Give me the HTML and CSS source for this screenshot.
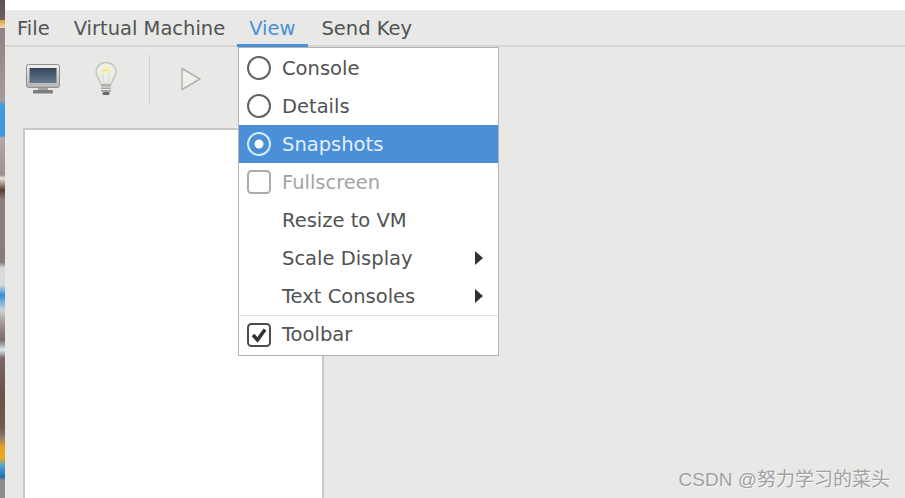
FILE: index.html
```html
<!DOCTYPE html>
<html lang="en">
<head>
    <meta charset="UTF-8">
    <meta name="viewport" content="width=device-width, initial-scale=1.0">
    <title>Virtual Machine</title>
    <link rel="stylesheet" href="styles.css">
</head>
<body>
    <div class="wallpaper"></div>
    <div class="main">
        <div class="top-strip"></div>
        <div class="window">
            <div class="menubar">
                <span class="menubar-item">File</span>
                <span class="menubar-item">Virtual Machine</span>
                <span class="menubar-item active">View</span>
                <span class="menubar-item send-key">Send Key</span>
            </div>
            <div class="toolbar">
                <svg class="tool-icon" width="34" height="30" viewBox="0 0 34 30">
                    <defs>
                        <linearGradient id="screenFill" x1="0" y1="0" x2="0" y2="1">
                            <stop offset="0" stop-color="#34465c"/>
                            <stop offset="1" stop-color="#67798f"/>
                        </linearGradient>
                        <linearGradient id="frameFill" x1="0" y1="0" x2="0" y2="1">
                            <stop offset="0" stop-color="#f0f0ef"/>
                            <stop offset="1" stop-color="#b4b4b3"/>
                        </linearGradient>
                    </defs>
                    <rect x="0.500" y="0.500" width="33" height="23" rx="2" fill="url(#frameFill)" stroke="#8f8f8f"/>
                    <rect x="3.500" y="4" width="27" height="15" fill="url(#screenFill)"/>
                    <rect x="12" y="24" width="10" height="2" fill="#a5a5a5"/>
                    <rect x="7" y="26" width="20" height="3.500" rx="1" fill="#7f7f7f"/>
                </svg>
                <svg class="tool-icon bulb" width="26" height="36" viewBox="0 0 26 36">
                    <defs>
                        <radialGradient id="glow" cx="0.500" cy="0.300" r="0.600">
                            <stop offset="0" stop-color="#f8f5c8"/>
                            <stop offset="0.400" stop-color="#f1f0e2"/>
                            <stop offset="1" stop-color="#e9e9e7"/>
                        </radialGradient>
                    </defs>
                    <path d="M13 1.500c-6 0-10 4.300-10 9.500 0 4.800 4 7 5 12.500h10c1-5.500 5-7.700 5-12.500 0-5.200-4-9.500-10-9.500z" fill="url(#glow)" stroke="#c4c4c1" stroke-width="1.500"/>
                    <path d="M8 9.500c2-2 8-2 10 0-2 1.500-8 1.500-10 0z" fill="#f4ea8c"/>
                    <path d="M11 23l-1.500-11M15 23l1.500-11" stroke="#d6d6d0" fill="none"/>
                    <rect x="8" y="23.500" width="10" height="7.500" rx="1" fill="#a8a8a6"/>
                    <path d="M8 26h10M8 28.500h10" stroke="#e4e4e3"/>
                    <rect x="9.500" y="31" width="7" height="3" rx="1.500" fill="#666"/>
                </svg>
                <div class="tool-separator"></div>
                <svg class="tool-icon" width="22" height="24" viewBox="0 0 22 24">
                    <path d="M2 1.500l18 10.500L2 22.500z" fill="#efefed" stroke="#b2b2af" stroke-width="1.500" stroke-linejoin="round"/>
                </svg>
            </div>
            <div class="panes">
                <div class="snapshot-list"></div>
            </div>
            <div class="watermark">CSDN @努力学习的菜头</div>
        </div>
    </div>

    <div class="menu">
        <div class="menu-item">
            <svg class="mark" width="24" height="24" viewBox="0 0 24 24"><circle cx="12" cy="12" r="11" fill="none" stroke="#5f6361" stroke-width="2"/></svg>
            <span>Console</span>
        </div>
        <div class="menu-item">
            <svg class="mark" width="24" height="24" viewBox="0 0 24 24"><circle cx="12" cy="12" r="11" fill="none" stroke="#5f6361" stroke-width="2"/></svg>
            <span>Details</span>
        </div>
        <div class="menu-item selected">
            <svg class="mark" width="24" height="24" viewBox="0 0 24 24"><circle cx="12" cy="12" r="11" fill="none" stroke="#dbe8f7" stroke-width="2"/><circle cx="12" cy="12" r="4.500" fill="#fff"/></svg>
            <span>Snapshots</span>
        </div>
        <div class="menu-item disabled">
            <svg class="mark" width="24" height="24" viewBox="0 0 24 24"><rect x="1" y="1" width="22" height="22" rx="3.500" fill="none" stroke="#aaacaa" stroke-width="2"/></svg>
            <span>Fullscreen</span>
        </div>
        <div class="menu-item">
            <span class="no-mark"></span>
            <span>Resize to VM</span>
        </div>
        <div class="menu-item">
            <span class="no-mark"></span>
            <span>Scale Display</span>
            <span class="arrow"></span>
        </div>
        <div class="menu-item">
            <span class="no-mark"></span>
            <span>Text Consoles</span>
            <span class="arrow"></span>
        </div>
        <div class="menu-separator"></div>
        <div class="menu-item last">
            <svg class="mark" width="24" height="24" viewBox="0 0 24 24"><rect x="1" y="1" width="22" height="22" rx="3.500" fill="none" stroke="#4a4d4b" stroke-width="2"/><path d="M6 12l4.500 5L18 6.500" fill="none" stroke="#2e3436" stroke-width="3.500"/></svg>
            <span>Toolbar</span>
        </div>
    </div>
</body>
</html>
```

FILE: styles.css
```css
* {
    box-sizing: border-box;
}
html, body {
    height: 100%;
}
body {
    margin: 0;
    display: flex;
    overflow: hidden;
    background: #fff;
    color: #505352;
    font-family: "DejaVu Sans", sans-serif;
    font-size: 19.500px;
}
.wallpaper {
    width: 5px;
    flex: none;
    background: linear-gradient(to bottom,
        #5d5153 0, #6a5e5f 20px, #e0a040 20px, #e8d8b0 28px, #8f8284 28px,
        #a69a9a 100px, #3f9be0 106px, #3f9be0 136px, #b3aaa8 138px,
        #a08f8f 175px, #e8e4e0 178px, #5a3d30 190px, #8e7f7f 200px,
        #8b7b7b 262px, #d8dadb 268px, #d8dadb 285px, #2f8fd8 295px,
        #cfd3d6 310px, #a89a96 322px, #7b6a68 340px, #d9e8f5 350px,
        #7b6a68 358px, #6b5048 395px, #76584f 428px, #8a7470 436px,
        #e8a028 447px, #f0a820 458px, #4aa5dc 466px, #1f6fa8 477px,
        #8c8a8e 480px, #8c8a8e 498px);
}
.main {
    flex: 1;
    min-width: 0;
    display: flex;
    flex-direction: column;
}
.top-strip {
    height: 10px;
    flex: none;
}
.window {
    flex: 1;
    min-height: 0;
    position: relative;
    display: flex;
    flex-direction: column;
    background: #e8e8e7;
}
.menubar {
    height: 37px;
    flex: none;
    display: flex;
    padding-left: 12px;
    border-bottom: 2px solid #d5d5d3;
}
.menubar-item {
    padding: 7px 12px 0;
    height: 37px;
}
.menubar-item:first-child {
    padding-left: 0;
}
.menubar-item.active {
    padding-right: 13px;
    color: #4a90d9;
    border-bottom: 3px solid #4a90d9;
}
.menubar-item.send-key {
    padding-left: 13px;
}
.toolbar {
    height: 81px;
    flex: none;
    display: flex;
    align-items: center;
    padding: 0 0 17px 21px;
}
.tool-icon {
    flex: none;
}
.bulb {
    margin-left: 33px;
}
.tool-separator {
    width: 1px;
    height: 51px;
    margin: 0 30px;
    background: #d2d2d0;
}
.panes {
    flex: 1;
    min-height: 0;
    padding-left: 18px;
}
.snapshot-list {
    width: 301px;
    height: 100%;
    background: #fff;
    border: 2px solid #c8c8c6;
    border-bottom: none;
}
.watermark {
    position: absolute;
    right: 15px;
    bottom: 7px;
    color: #a2a2a1;
    font-family: "Liberation Sans", "Noto Sans CJK SC", sans-serif;
    font-size: 19px;
    text-shadow: 1px 1px 0 #f6f6f6;
}
.menu {
    position: absolute;
    left: 238px;
    top: 47px;
    width: 261px;
    height: 309px;
    background: #fff;
    border: 1px solid #b4b4b2;
    padding-top: 1px;
}
.menu-item {
    height: 38px;
    display: flex;
    align-items: center;
    padding-left: 8px;
    white-space: nowrap;
}
.menu-item.last {
    height: 37px;
}
.menu-item.selected {
    background: #4a90d9;
    color: #e4eefa;
}
.menu-item.disabled {
    color: #a3a5a3;
}
.mark, .no-mark {
    width: 24px;
    height: 24px;
    flex: none;
    margin-right: 11px;
}
.arrow {
    margin-left: auto;
    margin-right: 15px;
    width: 0;
    height: 0;
    border-left: 8px solid #2e3436;
    border-top: 7px solid transparent;
    border-bottom: 7px solid transparent;
}
.menu-separator {
    height: 1px;
    background: #e2e2e0;
}
```
